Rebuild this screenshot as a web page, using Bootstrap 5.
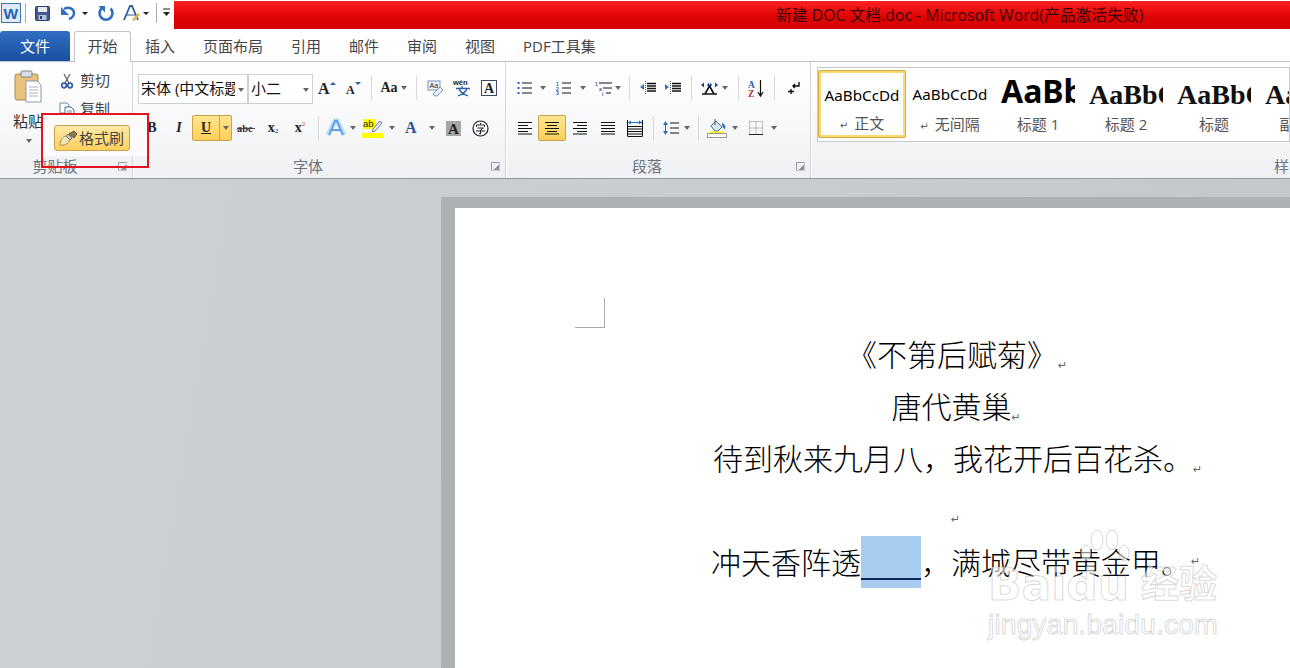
<!DOCTYPE html>
<html lang="zh"><head><meta charset="utf-8"><title>Word</title>
<link href="https://cdn.jsdelivr.net/npm/bootstrap@5.3.0/dist/css/bootstrap.min.css" rel="stylesheet">
<style>
html,body{height:100%;overflow:hidden}
body{font-family:"Open Sans","Noto Sans CJK SC",sans-serif;background:#fff;color:#444;width:1290px;height:668px;position:relative}
.titlerow{height:30px}
.qat{width:174px;height:30px}
.qat svg{display:block}
.redbar{flex:1;height:28px;margin-top:1px;background:linear-gradient(#ff2222,#e00404 55%,#d80000);color:#3b0505;font-size:15.8px;line-height:28px;padding-left:602px;white-space:nowrap}
.tabrow{height:32px;border-bottom:1px solid #bfc3c8;padding-top:1px}
.filetab{width:70px;height:30px;background:linear-gradient(#2f6fc4,#1b4f9f);color:#fff;font-size:15px;text-align:center;line-height:30px;border-radius:3px 3px 0 0;margin-right:4px}
.hometab{width:57px;height:31px;background:#fff;border:1px solid #bfc3c8;border-bottom:0;border-radius:3px 3px 0 0;font-size:15px;text-align:center;line-height:29px;margin-bottom:-1px;margin-right:14px}
.plaintab{font-size:15px;line-height:30px;color:#444;margin-right:28px;white-space:nowrap}
.ribbon{height:117px;background:linear-gradient(#fff,#fbfbfc 35%,#eef0f3);border-bottom:1px solid #96999e}
.grp{height:116px;border-right:1px solid #d2d5d9;box-shadow:1px 0 0 #fff;position:relative;flex:none}
.g1{width:133px}.g2{width:373px;padding:13px 0 0 5px}.g3{width:305px;padding:13px 0 0 10px}.g4{flex:1;min-width:0;border-right:0;padding:5px 0 0 6px;overflow:hidden}
.glabel{position:absolute;left:0;right:22px;top:95px;text-align:center;font-size:15px;line-height:18px;color:#6d7480}
.g4 .glabel{text-align:left;left:463px;right:auto;white-space:nowrap}
.launch{position:absolute;right:5px;top:100px;width:9px;height:9px;border:1px solid #9aa0a8;border-right-color:#c5c9ce;border-bottom-color:#c5c9ce;background:linear-gradient(135deg,transparent 60%,#8c929a 60%)}
.paste{width:51px;padding-left:13px;padding-top:8px}
.paste-t{font-size:15px;line-height:20px;margin-top:7px;white-space:nowrap;color:#333;width:32px}
.caret-s{width:0;height:0;border:3.5px solid transparent;border-top:4px solid #666;border-bottom:0;display:block}
.paste .caret-s{margin:8px 0 0 13px}
.cliprow{height:29px;font-size:15px;line-height:29px;color:#444}
.cliprow svg{margin-right:5px}
.clip{padding-top:4px;padding-left:8px}
.r1,.r2{height:26px}
.r2{margin-top:14px}
.combo{height:30px;border:1px solid #cdd0d4;background:#fff;font-size:15px;color:#111;line-height:26px;padding-left:2px;overflow:hidden;white-space:nowrap;position:relative;margin-top:-1px}
.cfont{width:110px}.csize{width:65px;margin-left:0;border-left:1px solid #cdd0d4}
.combo .caret-s{position:absolute;right:3px;top:13px}
.cfont-in{width:94px;overflow:hidden}
.sl{display:flex;align-items:center;justify-content:center;height:26px;flex:none;color:#222;font-family:"Liberation Serif",serif;line-height:1}
.sl svg{overflow:visible}
.s6{width:6px}.s8{width:8px}.s10{width:10px}.s12{width:12px}.s14{width:14px}.s16{width:16px}.s18{width:18px}.s20{width:20px}.s22{width:22px}.s24{width:24px}.s26{width:26px}.s27{width:27px}.s28{width:28px}.s32{width:32px}.s34{width:34px}.s36{width:36px}.s4{width:4px}
.vsep{width:1px;height:24px;background:#d6d8dc}
.btxt{font-weight:700;font-size:14px}
.itxt{font-style:italic;font-weight:700;font-size:14px}
.hot{background:linear-gradient(#ffe58f,#ffcf5a);border:1px solid #c9a24a;border-radius:2px}
.ubtn{width:40px;display:flex;height:26px;flex:none}
.ubtn .ul{width:27px;text-align:center;border-right:1px solid #c9a24a;font:700 14px/24px "Liberation Serif",serif;text-decoration:underline;color:#222}
.ubtn .ur{flex:1;display:flex;align-items:center;justify-content:center}
.sup{font-size:7px;color:#c77;position:relative;top:-4px}
.subn{font-size:7px;color:#36c;position:relative;top:3px}
.gallery{height:75px;border:1px solid #c6c9cd;background:#fff;padding:2px 0 0 0;overflow:hidden;white-space:nowrap}
.sty{width:88px;height:68px;flex:none;text-align:center;padding:0 6px;border:1px solid transparent}
.sty.on{border:3px solid #fdd870;outline:1px solid #d9aa45;outline-offset:-1px;border-radius:2px;padding:0 2px}
.prev{height:42px;overflow:hidden;color:#000;line-height:44px;display:block}
.slab{font-size:15px;line-height:22px;color:#555}
.slab i{font:normal 10px "DejaVu Sans",sans-serif;margin-right:2px}
.pv0{font:15.2px/47px "Noto Sans",sans-serif;margin:0 -4px}
.pv1{font:700 32px/40px "Noto Sans",sans-serif;text-align:left}
.pv2{font:700 28px/48px "Liberation Serif",serif;color:#111;text-align:left}
.sty.on .prev{height:39px;line-height:44px;margin:0}
.doc{height:490px;background:linear-gradient(100deg,#cdd0d5,#c4c7cc);padding:18px 0 0 441px}
.pshadow{height:472px;background:#adb0b4;padding:11px 0 0 14px}
.pagew{height:461px;background:#fff;position:relative;padding-top:120px;padding-left:258px;font-family:"Noto Sans CJK SC",sans-serif;font-weight:300;font-size:30px;color:#000;white-space:nowrap}
.crop{position:absolute;left:120px;top:90px;width:30px;height:30px;border-right:1px solid #a9a9a9;border-bottom:1px solid #a9a9a9}
.poem{width:480px}
.ln{text-align:center;line-height:51px}
.l1{height:51px;padding-left:8px}.l2{height:52px;line-height:52px;padding-left:6px}.l3{height:52px;line-height:52px;text-align:left}.l4{height:58px;line-height:12px;padding-top:18px;padding-left:5px}.l5{height:41px;line-height:41px;text-align:left;display:flex;align-items:center;margin-left:-2px}
.pm{font-size:11px;color:#666;font-weight:400;font-family:"DejaVu Sans",sans-serif;vertical-align:-3px;margin-left:1px}
.pm0{margin-left:0}
.seltxt{display:block;width:60px;height:52px;flex:none;background:linear-gradient(#a8ccf0 42px,#0c2a58 42px,#0c2a58 44px,#a8ccf0 44px)}
.redbox{position:absolute;left:41px;top:113px;width:108px;height:55px;border:2px solid #e3141b;background:linear-gradient(#fbfbfc 80%,rgba(246,247,249,0) 80%);padding:10px 0 0 11px}
.brush{width:76px;height:26px;background:linear-gradient(#ffe9a6,#ffd05e);border:1px solid #c9a24a;border-radius:3px;display:flex;align-items:center;font-size:15px;color:#444;padding-left:4px;gap:1px;white-space:nowrap}
.wm{position:absolute;left:988px;top:528px;width:232px;height:116px;pointer-events:none;color:rgba(255,255,255,.6);-webkit-text-stroke:1px rgba(130,130,130,.32);font-family:"DejaVu Sans",sans-serif;font-weight:700}
.wm-a{position:absolute;left:0;top:32px;font-size:44px;line-height:50px;letter-spacing:0}
.wm-b{position:absolute;left:153px;top:31px;font:700 38px/44px "Noto Sans CJK SC",sans-serif}
.wm-c{position:absolute;left:0;top:79px;font-family:"Liberation Sans",sans-serif;font-weight:400;font-size:28.5px;line-height:34px;white-space:nowrap}
.wm-p{position:absolute;left:92px;top:1px}
</style></head><body>
<svg width="0" height="0" class="d-block position-absolute"><defs>
<symbol id="li" viewBox="0 0 16 14"><path d="M1 1.500h14M1 4.500h10M1 7.500h14M1 10.500h10M1 13h14" stroke="#111" fill="none"/></symbol>
<symbol id="ce" viewBox="0 0 16 14"><path d="M1 1.500h14M3 4.500h10M1 7.500h14M3 10.500h10M1 13h14" stroke="#111" fill="none"/></symbol>
<symbol id="ri" viewBox="0 0 16 14"><path d="M1 1.500h14M5 4.500h10M1 7.500h14M5 10.500h10M1 13h14" stroke="#111" fill="none"/></symbol>
<symbol id="ju" viewBox="0 0 16 14"><path d="M1 1.500h14M1 4.500h14M1 7.500h14M1 10.500h14M1 13h14" stroke="#111" fill="none"/></symbol>
</defs></svg>

<div class="titlerow d-flex">
  <div class="qat d-flex align-items-center">
    <svg width="174" height="30" viewBox="0 0 174 30">
      <rect x="1.500" y="3.500" width="19" height="19" fill="#dfeaf6" stroke="#3f74b0"/>
      <text x="3.500" y="18.500" font-family="Liberation Sans" font-weight="700" font-size="15.500" fill="#1f62b4">W</text>
      <path d="M25.500 3v20M156.500 3v20" stroke="#a9adb3"/>
      <rect x="35.500" y="6.500" width="14" height="14" rx="1" fill="#46598f" stroke="#29406e"/><rect x="38" y="7" width="9" height="5" fill="#e8edf5"/><rect x="38.500" y="15" width="8" height="5" fill="#b8c2d6"/><rect x="40" y="16" width="2" height="3" fill="#29406e"/>
      <path d="M64 9c5-3 10 0 10 4 0 3-2 5-5 6" fill="none" stroke="#2e6fc0" stroke-width="2.500"/><path d="M61 7v8h8z" fill="#2e6fc0"/>
      <path d="M82 12h6l-3 3zM143 12h6l-3 3z" fill="#222"/>
      <path d="M101.500 8.500a6.500 6.500 0 1 0 9 0" fill="none" stroke="#2e6fc0" stroke-width="2.600"/><path d="M98.500 6h6.500v6.500z" fill="#2e6fc0"/>
      <path d="M124 20l6-14h2l6 14" fill="none" stroke="#2f5d9c" stroke-width="1.800"/><path d="M127 15h8" stroke="#2f5d9c"/><path d="M132 20l6-7 2 2-6 6z" fill="#e6b24c"/>
      <path d="M163 9h7" stroke="#222"/><path d="M163 12h7l-3.500 4z" fill="#222"/>
    </svg>
  </div>
  <div class="redbar">新建 DOC 文档.doc - Microsoft Word(产品激活失败)</div>
</div>

<div class="tabrow d-flex">
  <div class="filetab">文件</div>
  <div class="hometab">开始</div>
  <div class="plaintab">插入</div><div class="plaintab">页面布局</div><div class="plaintab">引用</div><div class="plaintab">邮件</div><div class="plaintab">审阅</div><div class="plaintab">视图</div><div class="plaintab">PDF工具集</div>
</div>

<div class="ribbon d-flex">
  <div class="grp g1 d-flex">
    <div class="paste">
      <svg width="30" height="34" viewBox="0 0 30 34" class="d-block">
        <rect x="2" y="4" width="23" height="26" rx="2" fill="#e8c27a" stroke="#a98a55"/><rect x="8" y="1" width="11" height="6" rx="1" fill="#d8dde3" stroke="#7d8791"/>
        <path d="M13 11h11l4 4v17H13z" fill="#fff" stroke="#8d9aa8"/><path d="M16 17h9M16 20h9M16 23h9M16 26h9" stroke="#a9b3bf"/>
      </svg>
      <div class="paste-t">粘贴</div>
      <span class="caret-s"></span>
    </div>
    <div class="clip">
      <div class="cliprow d-flex align-items-center">
        <svg width="16" height="16" viewBox="0 0 16 16"><path d="M5 1l5 9M11 1L6 10" stroke="#667" stroke-width="1.300" fill="none"/><circle cx="5" cy="12.500" r="2.300" fill="none" stroke="#2d5fa8" stroke-width="1.700"/><circle cx="11" cy="12.500" r="2.300" fill="none" stroke="#2d5fa8" stroke-width="1.700"/></svg>剪切
      </div>
      <div class="cliprow d-flex align-items-center">
        <svg width="16" height="16" viewBox="0 0 16 16"><path d="M1 1h7l2 2v8H1z" fill="#fff" stroke="#6d88a8"/><path d="M6 5h6l3 3v7H6z" fill="#fff" stroke="#3d6aa0"/><path d="M8 9h5M8 11h5M8 13h5" stroke="#6d88a8"/></svg>复制
      </div>
    </div>
    <div class="glabel">剪贴板</div><span class="launch"></span>
  </div>

  <div class="grp g2">
    <div class="r1 d-flex">
      <div class="combo cfont d-flex"><div class="cfont-in">宋体 (中文标题</div><span class="caret-s"></span></div>
      <div class="combo csize">小二<span class="caret-s"></span></div>
      <div class="sl s28"><svg width="18" height="14" viewBox="0 0 18 14"><text x="0" y="13" font-family="Liberation Serif" font-weight="700" font-size="16" fill="#222">A</text><path d="M12 4l3-3 3 3z" fill="#2d5fa8"/></svg></div>
      <div class="sl s24"><svg width="15" height="14" viewBox="0 0 15 14"><text x="0" y="13" font-family="Liberation Serif" font-weight="700" font-size="12" fill="#222">A</text><path d="M9 1h6l-3 3z" fill="#2d5fa8"/></svg></div>
      <div class="sl s12"><span class="vsep"></span></div>
      <div class="sl s24 btxt">Aa</div>
      <div class="sl s6"><span class="caret-s"></span></div>
      <div class="sl s18"><span class="vsep"></span></div>
      <div class="sl s20"><svg width="17" height="17" viewBox="0 0 17 17"><rect x="1" y="1" width="12" height="9" fill="#eef3fa" stroke="#7d93b3"/><text x="2.500" y="8" font-family="Liberation Sans" font-size="7" fill="#223">Aa</text><path d="M6 14l7-7 3 3-6 6H8z" fill="#e8eef5" stroke="#7d93b3"/></svg></div>
      <div class="sl s36"><svg width="20" height="18" viewBox="0 0 20 18"><text x="0" y="6" font-family="Liberation Sans" font-weight="700" font-size="7.500" fill="#222">wén</text><path d="M9 7v2M3 9.500h14M6 9.500c1 4 5 6 9 7.500M14 9.500c-1 4-5 6-9 7.500" stroke="#2d5fa8" fill="none" stroke-width="1.300"/></svg></div>
      <div class="sl s16"><svg width="16" height="16" viewBox="0 0 16 16"><rect x=".5" y=".5" width="15" height="15" fill="#fff" stroke="#3e4a5a"/><text x="3" y="13" font-family="Liberation Serif" font-weight="700" font-size="14" fill="#222">A</text></svg></div>
    </div>
    <div class="r2 d-flex">
      <div class="sl s28 btxt">B</div>
      <div class="sl s26 itxt">I</div>
      <div class="ubtn hot"><div class="ul">U</div><div class="ur"><span class="caret-s"></span></div></div>
      <div class="sl s28"><svg width="18" height="12" viewBox="0 0 18 12"><text x="0" y="10" font-family="Liberation Serif" font-weight="700" font-size="10.500" fill="#333">abc</text><path d="M0 6.500h18" stroke="#444"/></svg></div>
      <div class="sl s26 btxt">x<span class="subn">2</span></div>
      <div class="sl s28 btxt">x<span class="sup">2</span></div>
      <div class="sl s8"><span class="vsep"></span></div>
      <div class="sl s28"><svg width="20" height="20" viewBox="0 0 20 20"><path d="M2 17L9 3h2l7 14" fill="none" stroke="#bcdcf7" stroke-width="5"/><path d="M3 17L9 3h2l6 14M5.500 12h9" fill="none" stroke="#5a9fe0" stroke-width="1.800"/></svg></div>
      <div class="sl s6"><span class="caret-s"></span></div>
      <div class="sl s32"><svg width="21" height="20" viewBox="0 0 21 20"><rect x="1" y="1" width="13" height="10" fill="#ff0"/><text x="1" y="9" font-family="Liberation Sans" font-size="9.500" fill="#222">ab</text><path d="M11 11l7-8 2 2-7 8-3 1z" fill="#e9eef5" stroke="#6b7f99"/><rect y="15" width="21" height="5" fill="#ff0"/></svg></div>
      <div class="sl s8"><span class="caret-s"></span></div>
      <div class="sl s32"><svg width="16" height="17" viewBox="0 0 16 17"><text x="1" y="13" font-family="Liberation Serif" font-weight="700" font-size="16" fill="#2d4f8f">A</text></svg></div>
      <div class="sl s8"><span class="caret-s"></span></div>
      <div class="sl s34"><svg width="15" height="15" viewBox="0 0 15 15"><rect width="15" height="15" fill="#a6a6a6"/><text x="2" y="13" font-family="Liberation Serif" font-weight="700" font-size="15" fill="#222">A</text></svg></div>
      <div class="sl s20"><svg width="17" height="17" viewBox="0 0 17 17"><circle cx="8.500" cy="8.500" r="7.500" fill="#fff" stroke="#222" stroke-width="1.200"/><path d="M8.500 3v1.500M4.500 7V5h8v2M5.500 8h6l-3 2v4l-1.500-.5M4 11h9" fill="none" stroke="#222"/></svg></div>
    </div>
    <div class="glabel">字体</div><span class="launch"></span>
  </div>

  <div class="grp g3">
    <div class="r1 d-flex">
      <div class="sl s16"><svg width="15" height="14" viewBox="0 0 15 14"><path d="M5 2h10M5 7h10M5 12h10" stroke="#111"/><path d="M.5 1h2v2h-2zM.5 6h2v2h-2zM.5 11h2v2h-2z" fill="#2d5fa8"/></svg></div>
      <div class="sl s22"><span class="caret-s"></span></div>
      <div class="sl s18"><svg width="15" height="14" viewBox="0 0 15 14"><path d="M6 2h9M6 7h9M6 12h9" stroke="#111"/><text x="0" y="4.500" font-size="5" fill="#2d5fa8" font-family="Liberation Sans" font-weight="700">1</text><text x="0" y="9.500" font-size="5" fill="#2d5fa8" font-family="Liberation Sans" font-weight="700">2</text><text x="0" y="14" font-size="5" fill="#2d5fa8" font-family="Liberation Sans" font-weight="700">3</text></svg></div>
      <div class="sl s22"><span class="caret-s"></span></div>
      <div class="sl s18"><svg width="17" height="15" viewBox="0 0 17 15"><path d="M4 2h13M8 7h9M11 12h5" stroke="#111"/><text x="0" y="4.500" font-size="5" fill="#2d5fa8" font-family="Liberation Sans" font-weight="700">1</text><text x="4" y="9.500" font-size="5" fill="#2d5fa8" font-family="Liberation Sans" font-weight="700">a</text><text x="7" y="15" font-size="5" fill="#2d5fa8" font-family="Liberation Sans" font-weight="700">i</text></svg></div>
      <div class="sl s12"><span class="caret-s"></span></div>
      <div class="sl s10"><span class="vsep"></span></div>
      <div class="sl s28"><svg width="16" height="14" viewBox="0 0 16 14"><path d="M7 2.500h9M7 5h9M7 7.500h9M7 10h9" stroke="#111" stroke-width="1.300"/><path d="M5.500 0v14" stroke="#555" stroke-dasharray="1 1"/><path d="M0 6l4-3v6z" fill="#2d6fc0"/></svg></div>
      <div class="sl s22"><svg width="16" height="14" viewBox="0 0 16 14"><path d="M7 2.500h9M7 5h9M7 7.500h9M7 10h9" stroke="#111" stroke-width="1.300"/><path d="M5.500 0v14" stroke="#555" stroke-dasharray="1 1"/><path d="M4 6L0 3v6z" fill="#2d6fc0"/></svg></div>
      <div class="sl s14"><span class="vsep"></span></div>
      <div class="sl s22"><svg width="17" height="13" viewBox="0 0 17 13"><path d="M1 12h15M4 12L8.500 4 13 12" stroke="#111" fill="none" stroke-width="1.600"/><path d="M0 3l3-2.500v5zM17 3l-3-2.500v5zM6 3l2-2.500v5zM11 3L9 .5v5z" fill="#1d3f88"/></svg></div>
      <div class="sl s10"><span class="caret-s"></span></div>
      <div class="sl s16"><span class="vsep"></span></div>
      <div class="sl s20"><svg width="17" height="17" viewBox="0 0 17 17"><text x="0" y="8" font-size="9.500" font-family="Liberation Serif" font-weight="700" fill="#2d5fa8">A</text><text x="0" y="17" font-size="9.500" font-family="Liberation Serif" font-weight="700" fill="#a33">Z</text><path d="M12.500 0v15M10 12l2.500 4 2.500-4" stroke="#111" fill="none" stroke-width="1.200"/></svg></div>
      <div class="sl s16"><span class="vsep"></span></div>
      <div class="sl s22"><svg width="15" height="14" viewBox="0 0 15 14"><path d="M13 1v4H7M9 3L7 5l2 2M5 8v5M2 10.500h6" stroke="#111" fill="none" stroke-width="1.400"/></svg></div>
    </div>
    <div class="r2 d-flex">
      <div class="sl s18"><svg width="16" height="14"><use href="#li"/></svg></div>
      <div class="s4 flex-none"></div>
      <div class="sl s28 hot"><svg width="16" height="14"><use href="#ce"/></svg></div>
      <div class="sl s28"><svg width="16" height="14"><use href="#ri"/></svg></div>
      <div class="sl s28"><svg width="16" height="14"><use href="#ju"/></svg></div>
      <div class="sl s26"><svg width="16" height="17" viewBox="0 0 16 17"><path d="M1 6.500h14M1 9h14M1 11.500h14M1 14h14M1 16.500h14M.5 0v16.500M15.500 0v16.500" stroke="#111" fill="none"/><path d="M1 2.500h14" stroke="#2d6fc0"/><path d="M1 2.500l3-2v4zM15 2.500l-3-2v4z" fill="#2d6fc0"/></svg></div>
      <div class="sl s10"><span class="vsep"></span></div>
      <div class="sl s26"><svg width="16" height="16" viewBox="0 0 16 16"><path d="M7 3h9M7 8h9M7 13h9" stroke="#111"/><path d="M2.500 3v10" stroke="#2d6fc0"/><path d="M0 5l2.500-4L5 5zM0 11l2.500 4L5 11z" fill="#2d6fc0"/></svg></div>
      <div class="sl s6"><span class="caret-s"></span></div>
      <div class="sl s16"><span class="vsep"></span></div>
      <div class="sl s22"><svg width="20" height="22" viewBox="0 0 20 22"><path d="M4 9l5-5 6 6-4 4H8z" fill="#dbe6f2" stroke="#496b96"/><path d="M8 2v6" stroke="#555"/><path d="M15 6c3 1 4 4 3 6-2 0-3-3-3-6z" fill="#2d6fc0"/><rect x="3" y="14.500" width="14" height="2" fill="#ff0"/><rect x=".5" y="16.500" width="19" height="4" fill="#fff" stroke="#999"/></svg></div>
      <div class="sl s14"><span class="caret-s"></span></div>
      <div class="sl s28"><svg width="14" height="14" viewBox="0 0 14 14"><path d="M.5 .5h13M.5 7h13M7 .5v13M.5 .5v13M13.500 .5v13" stroke="#888" stroke-dasharray="1 1" fill="none"/><path d="M0 13.500h14" stroke="#222"/></svg></div>
      <div class="sl s8"><span class="caret-s"></span></div>
    </div>
    <div class="glabel">段落</div><span class="launch"></span>
  </div>

  <div class="grp g4">
    <div class="gallery d-flex">
      <div class="sty on"><span class="prev pv0">AaBbCcDd</span><div class="slab"><i>↵</i> 正文</div></div>
      <div class="sty"><span class="prev pv0">AaBbCcDd</span><div class="slab"><i>↵</i> 无间隔</div></div>
      <div class="sty"><span class="prev pv1">AaBb</span><div class="slab">标题 1</div></div>
      <div class="sty"><span class="prev pv2">AaBbC</span><div class="slab">标题 2</div></div>
      <div class="sty"><span class="prev pv2">AaBbC</span><div class="slab">标题</div></div>
      <div class="sty"><span class="prev pv2">AaBbC</span><div class="slab">副标题</div></div>
    </div>
    <div class="glabel">样式</div>
  </div>
</div>

<div class="doc">
  <div class="pshadow">
    <div class="pagew">
      <div class="crop"></div>
      <div class="poem">
        <div class="ln l1">《不第后赋菊》<span class="pm">↵</span></div>
        <div class="ln l2">唐代黄巢<span class="pm pm0">↵</span></div>
        <div class="ln l3">待到秋来九月八，我花开后百花杀。<span class="pm pm0">↵</span></div>
        <div class="ln l4"><span class="pm pm0">↵</span></div>
        <div class="ln l5">冲天香阵透<span class="seltxt"></span>，满城尽带黄金甲。<span class="pm pm0">↵</span></div>
      </div>
    </div>
  </div>
</div>

<div class="redbox">
  <div class="brush">
    <svg width="19" height="17" viewBox="0 0 19 17"><path d="M1 15c4 1 8-1 10-5L7 6C3 7 1 11 1 15z" fill="#f3e6b5" stroke="#a08a50"/><path d="M7 6l2-2 4 4-2 2z" fill="#c0c6ce" stroke="#777"/><path d="M10 4l5-3 3 3-3 4z" fill="#8a7a55" stroke="#5f5338"/></svg>
    格式刷
  </div>
</div>

<div class="wm">
  <svg class="wm-p" width="50" height="40" viewBox="0 0 50 40"><g fill="rgba(255,255,255,.55)" stroke="rgba(130,130,130,.32)"><ellipse cx="6" cy="24" rx="5" ry="8"/><ellipse cx="17" cy="11" rx="6" ry="10"/><ellipse cx="32" cy="11" rx="6" ry="10"/><ellipse cx="44" cy="24" rx="5" ry="8"/></g></svg>
  <div class="wm-a">Baidu</div>
  <div class="wm-b">经验</div>
  <div class="wm-c">jingyan.baidu.com</div>
</div>
</body></html>
